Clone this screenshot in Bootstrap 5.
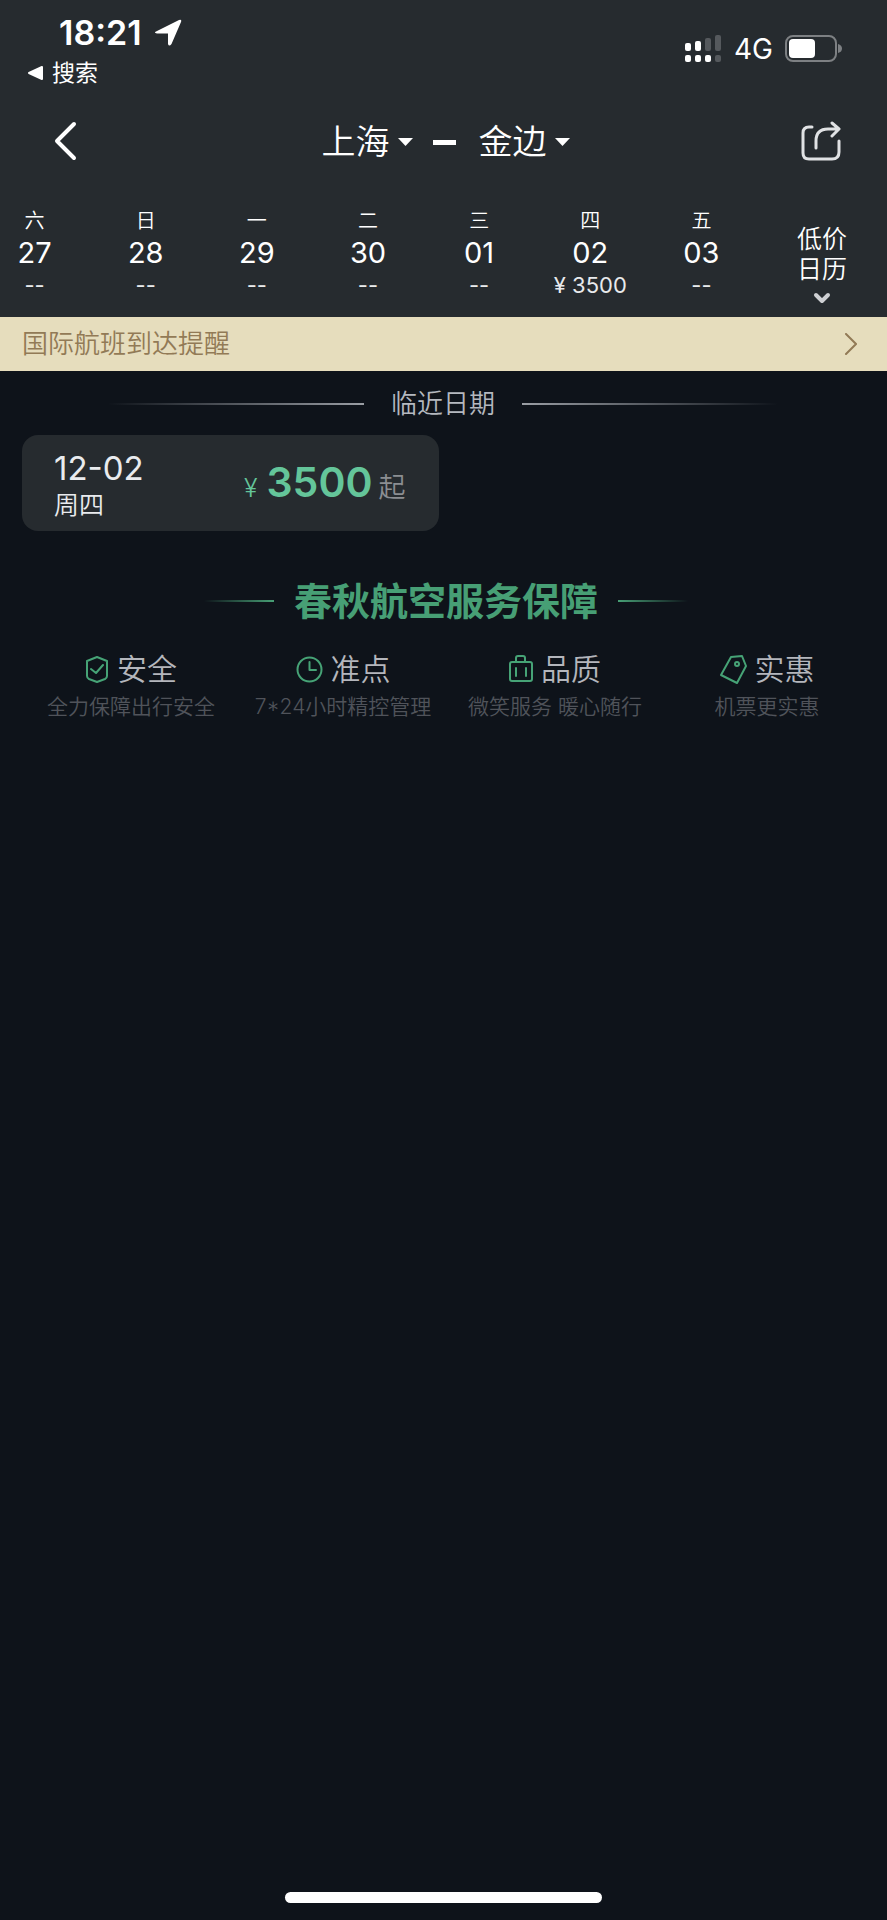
<!DOCTYPE html>
<html lang="zh-CN">
<head>
<meta charset="utf-8">
<meta name="viewport" content="width=device-width, initial-scale=1">
<title>上海 – 金边</title>
<link href="https://cdn.jsdelivr.net/npm/bootstrap@5.3.0/dist/css/bootstrap.min.css" rel="stylesheet">
<style>
  body { background: #0e131a; color: #fff; font-family: Inter, "Noto Sans CJK SC", sans-serif; }
  button { background: none; border: 0; padding: 0; color: inherit; }
  svg { display: block; flex: none; }
  .top-area { background: #262b2f; }

  .status-bar { height: 95px; padding: 13px 45px 0 27px; }
  .clock { font-size: 34px; line-height: 40px; font-weight: 600; padding-left: 32px; gap: 12px; }
  .back-app { font-size: 23px; line-height: 40px; gap: 8px; }
  .network { font-size: 28px; line-height: 32px; gap: 12px; height: 40px; margin-top: 16px; }

  .title-bar { height: 92px; padding: 0 46px 0 54px; }
  .city-pair { padding-left: 12px; }
  .city { font-size: 34px; line-height: 40px; font-weight: 350; gap: 8px; padding-top: 2px; }
  .city-dash { width: 23px; height: 5px; background: #fff; margin: 2px 23px 0 20px; }

  .date-scroll { overflow: hidden; }
  .date-track { margin-left: -21px; }
  .date-item { flex: 1 1 0; color: #fff; text-align: center; white-space: nowrap; height: 130px; padding-top: 19px; }
  .date-week { font-size: 20px; line-height: 30px; font-weight: 350; }
  .date-day { font-size: 29px; line-height: 34px; }
  .date-price { font-size: 22px; line-height: 30px; color: #e8eaec; }
  .calendar-btn { width: 130px; font-size: 25px; line-height: 30px; font-weight: 350; padding-top: 37px; }

  .notice { height: 54px; padding: 0 30px 0 22px; background: #e6ddbd; color: #927a56; font-size: 26px; line-height: 40px; font-weight: 350; }
  .notice:hover { color: #927a56; }

  .near-title { font-size: 26px; line-height: 40px; font-weight: 350; color: #b4b8bf; padding: 13px 109px 11px 108px; gap: 27px; }
  .fade-rule { flex: 1 1 0; height: 2px; background: linear-gradient(to right, transparent, #9a9ea4); }
  .fade-rule.to-right { background: linear-gradient(to left, transparent, #9a9ea4); }

  .near-list { padding: 0 16px; }
  .near-list > * { padding: 0 5px 0 6px; }
  .near-card { height: 96px; border-radius: 16px; background: #262b2f; color: #e9ebee; padding: 4px 33px 0 32px; }
  .near-date { font-size: 33px; line-height: 40px; }
  .near-week { font-size: 25px; line-height: 34px; font-weight: 350; }
  .near-price { color: #64c59a; gap: 9px; line-height: 52px; }
  .near-price .yen { font-size: 25px; font-weight: 350; }
  .near-price .sum { font-size: 41px; font-weight: 600; }
  .near-price .from { font-size: 27px; font-weight: 350; color: #8b8e92; margin-left: -3px; }

  .promise { padding: 46px 14px 0 25px; }
  .promise-title { font-size: 38px; line-height: 48px; font-weight: 700; color: #479f75; gap: 20px; margin: 0 6px 22px 0; }
  .promise-rule { width: 70px; height: 2px; background: linear-gradient(to right, transparent, #479f75); }
  .promise-rule.to-right { background: linear-gradient(to left, transparent, #479f75); }
  .promise-name { font-size: 30px; line-height: 44px; font-weight: 350; color: #b4b6bc; gap: 8px; margin: 0; }
  .promise-name svg { stroke: #46a376; stroke-width: 2; fill: none; stroke-linejoin: round; stroke-linecap: round; }
  .promise-text { font-size: 21px; line-height: 32px; font-weight: 350; color: #50535a; margin: 0; white-space: nowrap; }

  .home-bar { width: 317px; height: 11px; border-radius: 6px; background: #fff; margin: 0 auto 17px; }
</style>
</head>
<body class="d-flex flex-column min-vh-100">
<header class="top-area">
  <div class="status-bar d-flex justify-content-between">
    <div>
      <div class="clock d-flex align-items-center">18:21
        <svg width="28" height="28" viewBox="0 0 28 28"><path d="M2 12.500 25 1Q28 0 27 3L17.500 25Q15 28 14 25V14.500H3Q-.5 14 2 12.500Z" fill="#fff"/></svg>
      </div>
      <button type="button" class="back-app d-flex align-items-center">
        <svg width="17" height="16" viewBox="0 0 17 16"><path d="M2 8 15 2V14Z" fill="#fff" stroke="#fff" stroke-width="2" stroke-linejoin="round"/></svg>搜索
      </button>
    </div>
    <div class="network d-flex align-items-center">
      <svg width="37" height="28" viewBox="0 0 37 28"><g fill="#fff"><rect y="8" width="6" height="8" rx="2"/><rect x="10" y="6" width="6" height="10" rx="2"/><rect y="20" width="6" height="7" rx="2"/><rect x="10" y="20" width="6" height="7" rx="2"/><rect x="20" y="20" width="6" height="7" rx="2"/></g><g fill="#55595d"><rect x="20" y="3" width="6" height="13" rx="2"/><rect x="30" width="6" height="16" rx="2"/><rect x="30" y="20" width="6" height="7" rx="2"/></g></svg>
      <span>4G</span>
      <svg width="57" height="28" viewBox="0 0 57 28"><rect x="1" y="1" width="50" height="25" rx="7" fill="none" stroke="#7d8083" stroke-width="2"/><rect x="4" y="4" width="26" height="19" rx="4" fill="#fff"/><path d="M53 9Q57 10 57 13.500T53 18Z" fill="#7d8083"/></svg>
    </div>
  </div>
  <nav class="title-bar d-flex align-items-center justify-content-between" aria-label="航线">
    <button type="button" aria-label="返回"><svg width="24" height="40" viewBox="0 0 24 40"><path d="M20 3 3 20 20 37" fill="none" stroke="#fff" stroke-width="4" stroke-linecap="round" stroke-linejoin="round"/></svg></button>
    <div class="city-pair d-flex align-items-center">
      <button type="button" class="city d-flex align-items-center">上海<svg width="15" height="8" viewBox="0 0 15 8"><path d="M0 0H15L7.500 8Z" fill="#fff"/></svg></button>
      <span class="city-dash"></span>
      <button type="button" class="city d-flex align-items-center">金边<svg width="15" height="8" viewBox="0 0 15 8"><path d="M0 0H15L7.500 8Z" fill="#fff"/></svg></button>
    </div>
    <button type="button" aria-label="分享"><svg width="40" height="40" viewBox="0 0 40 40" fill="none" stroke="#e0e2e4" stroke-width="3" stroke-linecap="round" stroke-linejoin="round"><path d="M11 6H8Q2 6 2 12V32Q2 38 8 38H31Q38 38 38 31V20M15 27V20Q15 8 27 8H37M31 2 38 8 31 15"/></svg></button>
  </nav>
  <div class="d-flex">
    <div class="date-scroll flex-grow-1">
      <div class="date-track d-flex">
        <button type="button" class="date-item d-flex flex-column align-items-center"><span class="date-week">六</span><span class="date-day">27</span><span class="date-price">--</span></button>
        <button type="button" class="date-item d-flex flex-column align-items-center"><span class="date-week">日</span><span class="date-day">28</span><span class="date-price">--</span></button>
        <button type="button" class="date-item d-flex flex-column align-items-center"><span class="date-week">一</span><span class="date-day">29</span><span class="date-price">--</span></button>
        <button type="button" class="date-item d-flex flex-column align-items-center"><span class="date-week">二</span><span class="date-day">30</span><span class="date-price">--</span></button>
        <button type="button" class="date-item d-flex flex-column align-items-center"><span class="date-week">三</span><span class="date-day">01</span><span class="date-price">--</span></button>
        <button type="button" class="date-item d-flex flex-column align-items-center"><span class="date-week">四</span><span class="date-day">02</span><span class="date-price">¥ 3500</span></button>
        <button type="button" class="date-item d-flex flex-column align-items-center"><span class="date-week">五</span><span class="date-day">03</span><span class="date-price">--</span></button>
      </div>
    </div>
    <button type="button" class="calendar-btn d-flex flex-column align-items-center flex-shrink-0">
      <span>低价</span><span>日历</span>
      <svg class="mt-2" width="18" height="12" viewBox="0 0 18 12"><path d="M3 3 9 9 15 3" fill="none" stroke="#ced0d3" stroke-width="4" stroke-linecap="round" stroke-linejoin="round"/></svg>
    </button>
  </div>
</header>
<main class="flex-grow-1">
  <a href="#" class="notice d-flex align-items-center justify-content-between text-decoration-none">国际航班到达提醒
    <svg width="13" height="22" viewBox="0 0 13 22"><path d="M2 1 12 11 2 21" fill="none" stroke="#927a56" stroke-width="2" stroke-linecap="round"/></svg>
  </a>
  <section>
    <h2 class="near-title d-flex align-items-center m-0"><span class="fade-rule"></span>临近日期<span class="fade-rule to-right"></span></h2>
    <div class="near-list row g-0">
      <div class="col-6">
        <a href="#" class="near-card d-flex align-items-center justify-content-between text-decoration-none">
          <span class="d-flex flex-column"><span class="near-date">12-02</span><span class="near-week">周四</span></span>
          <span class="near-price d-flex align-items-baseline"><span class="yen">¥</span><span class="sum">3500</span><span class="from">起</span></span>
        </a>
      </div>
    </div>
  </section>
  <section class="promise">
    <h2 class="promise-title d-flex align-items-center justify-content-center"><span class="promise-rule"></span>春秋航空服务保障<span class="promise-rule to-right"></span></h2>
    <div class="row g-0 text-center">
      <div class="col-3">
        <h3 class="promise-name d-flex align-items-center justify-content-center"><svg width="24" height="27" viewBox="0 0 24 27"><path d="M12 1 22 5V20Q22 22 20 23L12 26 4 23Q2 22 2 20V5ZM6 13 11 17 18 9"/></svg>安全</h3>
        <p class="promise-text">全力保障出行安全</p>
      </div>
      <div class="col-3">
        <h3 class="promise-name d-flex align-items-center justify-content-center"><svg width="27" height="27" viewBox="0 0 27 27"><circle cx="13.500" cy="13.500" r="12"/><path d="M13.500 6V14H20"/></svg>准点</h3>
        <p class="promise-text">7*24小时精控管理</p>
      </div>
      <div class="col-3">
        <h3 class="promise-name d-flex align-items-center justify-content-center"><svg width="24" height="28" viewBox="0 0 24 28"><rect x="1" y="7" width="22" height="19" rx="2"/><path d="M7 7V3Q7 1 9 1H14Q16 1 16 3V7M7 13V21M17 13V21"/></svg>品质</h3>
        <p class="promise-text">微笑服务 暖心随行</p>
      </div>
      <div class="col-3">
        <h3 class="promise-name d-flex align-items-center justify-content-center"><svg width="27" height="29" viewBox="0 0 27 29"><path d="M11 2 22 1 26 11 17 28 1 20Z"/><circle cx="17" cy="9" r="2"/></svg>实惠</h3>
        <p class="promise-text">机票更实惠</p>
      </div>
    </div>
  </section>
</main>
<footer><div class="home-bar"></div></footer>
<script src="https://cdn.jsdelivr.net/npm/bootstrap@5.3.0/dist/js/bootstrap.bundle.min.js"></script>
</body>
</html>
